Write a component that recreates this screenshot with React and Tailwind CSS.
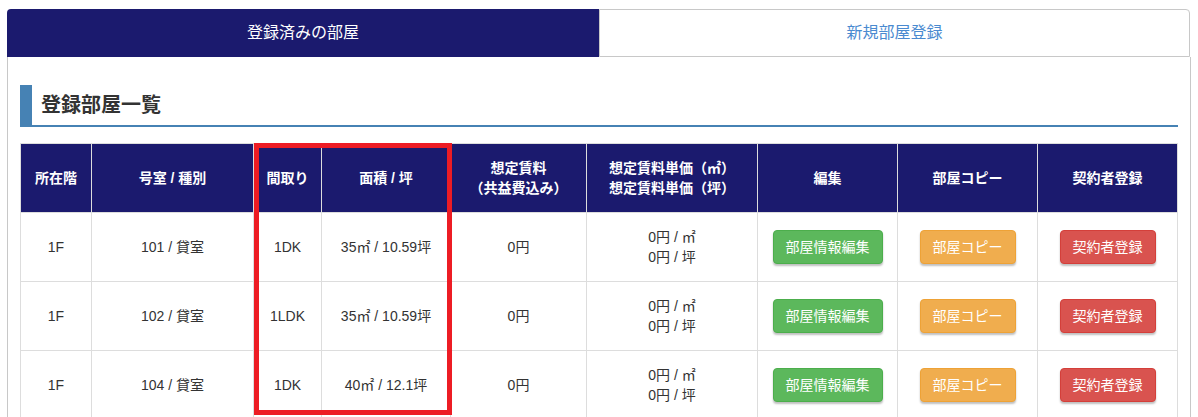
import React from "react";

const rooms = [
  { floor: "1F", room: "101 / 貸室", plan: "1DK", area: "35㎡ / 10.59坪" },
  { floor: "1F", room: "102 / 貸室", plan: "1LDK", area: "35㎡ / 10.59坪" },
  { floor: "1F", room: "104 / 貸室", plan: "1DK", area: "40㎡ / 12.1坪" },
];

const cols = [71, 162, 68, 129, 136, 171, 140, 140, 140];

function Btn({ className, children }) {
  return (
    <button
      className={`h-[34px] rounded px-3 text-[14px] text-white border shadow-[0_2px_2px_rgba(0,0,0,0.25)] ${className}`}
    >
      {children}
    </button>
  );
}

export default function App() {
  return (
    <div
      className="w-[1198px] h-[417px] overflow-hidden bg-white pt-[9px] pl-[7px] text-[#333]"
      style={{ fontFamily: '"Liberation Sans", "Noto Sans CJK JP", sans-serif' }}
    >
      {/* tabs */}
      <div className="flex w-[1183px] h-[48px]">
        <div className="w-[592px] bg-[#1b1a6e] rounded-tl flex items-center justify-center text-white text-[16px]">
          登録済みの部屋
        </div>
        <div className="flex-1 border border-[#c8c8c8] rounded-tr flex items-center justify-center text-[#4a8ad0] text-[16px]">
          新規部屋登録
        </div>
      </div>

      {/* panel */}
      <div className="w-[1184px] border-x border-[#c8c8c8] h-[400px] px-[12px] pt-[28px]">
        <div className="flex items-center h-[42px] border-b-2 border-[#4682b4]">
          <div className="w-[12px] h-full bg-[#4682b4]" />
          <h2 className="ml-[9px] text-[20px] font-bold text-[#333]">登録部屋一覧</h2>
        </div>

        <div className="relative mt-[16px] w-[1157px]">
          <table className="table-fixed border-collapse w-[1157px] text-[14px] leading-[20px] text-center">
            <colgroup>
              {cols.map((w, i) => (
                <col key={i} style={{ width: w }} />
              ))}
            </colgroup>
            <thead>
              <tr className="h-[69px] bg-[#1b1a6e] text-white font-bold">
                <th className="border border-[#ddd]">所在階</th>
                <th className="border border-[#ddd]">号室 / 種別</th>
                <th className="border border-[#ddd]">間取り</th>
                <th className="border border-[#ddd]">面積 / 坪</th>
                <th className="border border-[#ddd]">
                  想定賃料
                  <br />
                  （共益費込み）
                </th>
                <th className="border border-[#ddd]">
                  想定賃料単価（㎡）
                  <br />
                  想定賃料単価（坪）
                </th>
                <th className="border border-[#ddd]">編集</th>
                <th className="border border-[#ddd]">部屋コピー</th>
                <th className="border border-[#ddd]">契約者登録</th>
              </tr>
            </thead>
            <tbody>
              {rooms.map((r) => (
                <tr key={r.room} className="h-[69px]">
                  <td className="border border-[#ddd]">{r.floor}</td>
                  <td className="border border-[#ddd]">{r.room}</td>
                  <td className="border border-[#ddd]">{r.plan}</td>
                  <td className="border border-[#ddd]">{r.area}</td>
                  <td className="border border-[#ddd]">0円</td>
                  <td className="border border-[#ddd]">
                    0円 / ㎡
                    <br />
                    0円 / 坪
                  </td>
                  <td className="border border-[#ddd]">
                    <Btn className="bg-[#5cb85c] border-[#4cae4c]">部屋情報編集</Btn>
                  </td>
                  <td className="border border-[#ddd]">
                    <Btn className="bg-[#f0ad4e] border-[#eea236]">部屋コピー</Btn>
                  </td>
                  <td className="border border-[#ddd]">
                    <Btn className="bg-[#d9534f] border-[#d43f3a]">契約者登録</Btn>
                  </td>
                </tr>
              ))}
            </tbody>
          </table>

          {/* highlight overlay */}
          <div className="absolute left-[234px] top-0 w-[198px] h-[272px] border-[5px] border-[#ed1c24] pointer-events-none" />
        </div>
      </div>
    </div>
  );
}
